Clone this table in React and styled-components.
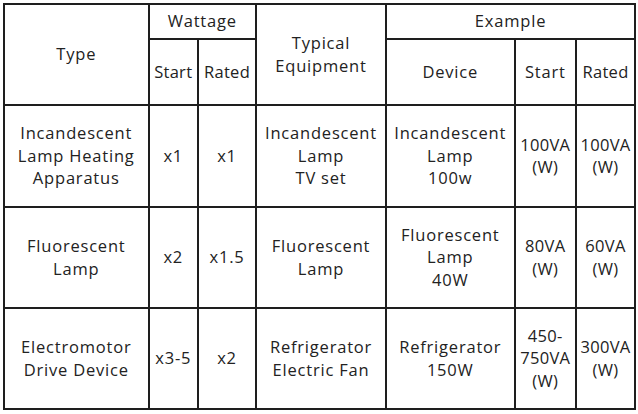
import styled, { createGlobalStyle } from "styled-components";

const Global = createGlobalStyle`
  html, body {
    margin: 0;
    padding: 0;
    background: #fff;
  }
  body {
    font-family: "Open Sans", "Liberation Sans", sans-serif;
    color: #222;
  }
`;

const Page = styled.div`
  padding: 3px 0 0 3px;
`;

const Table = styled.table`
  border-collapse: collapse;
  table-layout: fixed;
  width: 633px;
  border: 2px solid #1e1e1e;
`;

const Cell = styled.td`
  border: 2px solid #1e1e1e;
  padding: 0;
  text-align: center;
  vertical-align: middle;
  font-size: 16.5px;
  line-height: 22.5px;
  letter-spacing: 0.8px;
  white-space: nowrap;
`;

const NarrowCell = styled(Cell)`
  letter-spacing: 0.3px;
`;

const Row = styled.tr`
  height: ${(p) => p.$h}px;
`;

const cols = [144.5, 49.5, 58, 130, 128.5, 61.5, 59];

const rows = [
  {
    h: 102,
    type: ["Incandescent", "Lamp Heating", "Apparatus"],
    start: "x1",
    rated: "x1",
    equip: ["Incandescent", "Lamp", "TV set"],
    device: ["Incandescent", "Lamp", "100w"],
    exStart: ["100VA", "(W)"],
    exRated: ["100VA", "(W)"],
  },
  {
    h: 101,
    type: ["Fluorescent", "Lamp"],
    start: "x2",
    rated: "x1.5",
    equip: ["Fluorescent", "Lamp"],
    device: ["Fluorescent", "Lamp", "40W"],
    exStart: ["80VA", "(W)"],
    exRated: ["60VA", "(W)"],
  },
  {
    h: 101,
    type: ["Electromotor", "Drive Device"],
    start: "x3-5",
    rated: "x2",
    equip: ["Refrigerator", "Electric Fan"],
    device: ["Refrigerator", "150W"],
    exStart: ["450-", "750VA", "(W)"],
    exRated: ["300VA", "(W)"],
  },
];

const Lines = ({ items }) =>
  items.map((t, i) => (
    <span key={i}>
      {i > 0 && <br />}
      {t}
    </span>
  ));

export default function App() {
  return (
    <Page>
      <Global />
      <Table>
        <colgroup>
          {cols.map((w, i) => (
            <col key={i} style={{ width: w }} />
          ))}
        </colgroup>
        <tbody>
          <Row $h={35}>
            <Cell rowSpan={2}>Type</Cell>
            <Cell colSpan={2}>Wattage</Cell>
            <Cell rowSpan={2}>
              Typical
              <br />
              Equipment
            </Cell>
            <Cell colSpan={3}>Example</Cell>
          </Row>
          <Row $h={66}>
            <NarrowCell>Start</NarrowCell>
            <NarrowCell>Rated</NarrowCell>
            <Cell>Device</Cell>
            <Cell>Start</Cell>
            <NarrowCell>Rated</NarrowCell>
          </Row>
          {rows.map((r, i) => (
            <Row key={i} $h={r.h}>
              <Cell>
                <Lines items={r.type} />
              </Cell>
              <Cell>{r.start}</Cell>
              <Cell>{r.rated}</Cell>
              <Cell>
                <Lines items={r.equip} />
              </Cell>
              <Cell>
                <Lines items={r.device} />
              </Cell>
              <NarrowCell>
                <Lines items={r.exStart} />
              </NarrowCell>
              <NarrowCell>
                <Lines items={r.exRated} />
              </NarrowCell>
            </Row>
          ))}
        </tbody>
      </Table>
    </Page>
  );
}
